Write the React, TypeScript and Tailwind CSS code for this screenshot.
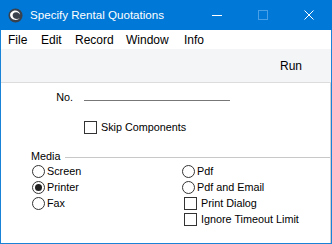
import React from "react";

const Radio = ({ checked }: { checked?: boolean }) => (
  <svg width="13" height="13" viewBox="0 0 13 13" className="shrink-0">
    <circle cx="6.5" cy="6.5" r="6" fill="white" stroke="#333" strokeWidth="1" />
    {checked && <circle cx="6.5" cy="6.5" r="3.5" fill="#222" />}
  </svg>
);

const Check = () => (
  <div className="w-[13px] h-[13px] border border-[#333] bg-white shrink-0" />
);

export default function App() {
  const font = { fontFamily: '"Liberation Sans", Arial, sans-serif' };
  return (
    <div
      className="w-[332px] h-[244px] flex flex-col border border-[#1883d7] border-t-0 bg-white text-[10.8px] text-black"
      style={font}
    >
      <div className="h-[30px] bg-[#0078d7] flex items-center text-white shrink-0 -mx-px">
        <svg width="15" height="15" viewBox="0 0 16 16" className="ml-[8px] mr-[7px]">
          <circle cx="8" cy="8" r="7.5" fill="#39414c" />
          <path d="M2.2 7.5 C2.5 12.5 9 14.5 12.5 11 C9.5 12.3 5.5 11.5 5 8.5 C4.6 6 6.5 4.3 9 4.5 C11 4.7 12.5 6 13 7.5 C12.8 3.8 9 2 6 3 C3.8 3.8 2.2 5.5 2.2 7.5 Z" fill="white" />
          <circle cx="9.5" cy="8" r="1.6" fill="#39414c" />
        </svg>
        <span className="text-[11.6px]">Specify Rental Quotations</span>
        <div className="ml-auto flex items-center h-full">
          <div className="w-[46px] h-full flex items-center justify-center">
            <div className="w-[10px] h-px bg-white" />
          </div>
          <div className="w-[46px] h-full flex items-center justify-center">
            <div className="w-[10px] h-[10px] border border-[#4aa0e6]" />
          </div>
          <div className="w-[46px] h-full flex items-center justify-center">
            <svg width="10" height="10" viewBox="0 0 10 10">
              <path d="M0.5 0.5 L9.5 9.5 M9.5 0.5 L0.5 9.5" stroke="white" strokeWidth="1" />
            </svg>
          </div>
        </div>
      </div>
      <div className="h-[19px] bg-white flex items-center pl-[7px] shrink-0 text-[12px]">
        <span className="w-[33px]">File</span>
        <span className="w-[34px]">Edit</span>
        <span className="w-[51px]">Record</span>
        <span className="w-[58px]">Window</span>
        <span>Info</span>
      </div>
      <div className="h-[34px] bg-[#f4f5f7] border-b border-[#dcdcdc] flex items-center justify-end pr-[29px] shrink-0 text-[12px]">
        <span>Run</span>
      </div>
      <div className="flex-1 bg-white border-r border-[#d0d0d0] flex flex-col">
        <div className="flex items-center mt-[6px] h-[16px]">
          <span className="w-[72px] text-right">No.</span>
          <div className="ml-[11px] w-[146px] border-b border-[#777] h-[12px] self-start" />
        </div>
        <div className="flex items-center mt-[15px] h-[14px] pl-[83px] gap-[4px]">
          <Check />
          <span>Skip Components</span>
        </div>
        <div className="flex items-center mt-[15px] h-[14px] pl-[30px]">
          <span>Media</span>
          <div className="flex-1 ml-[5px] border-b border-[#c8c8c8] mt-[2px]" />
        </div>
        <div className="flex pl-[31px]">
          <div className="flex flex-col w-[150px]">
            <div className="flex items-center gap-[2px] h-[16px]"><Radio /><span>Screen</span></div>
            <div className="flex items-center gap-[2px] h-[16px]"><Radio checked /><span>Printer</span></div>
            <div className="flex items-center gap-[2px] h-[16px]"><Radio /><span>Fax</span></div>
          </div>
          <div className="flex flex-col">
            <div className="flex items-center gap-[2px] h-[16px]"><Radio /><span>Pdf</span></div>
            <div className="flex items-center gap-[2px] h-[16px]"><Radio /><span>Pdf and Email</span></div>
            <div className="flex items-center gap-[4px] h-[16px] pl-[2px]"><Check /><span>Print Dialog</span></div>
            <div className="flex items-center gap-[4px] h-[16px] pl-[2px]"><Check /><span>Ignore Timeout Limit</span></div>
          </div>
        </div>
      </div>
    </div>
  );
}
